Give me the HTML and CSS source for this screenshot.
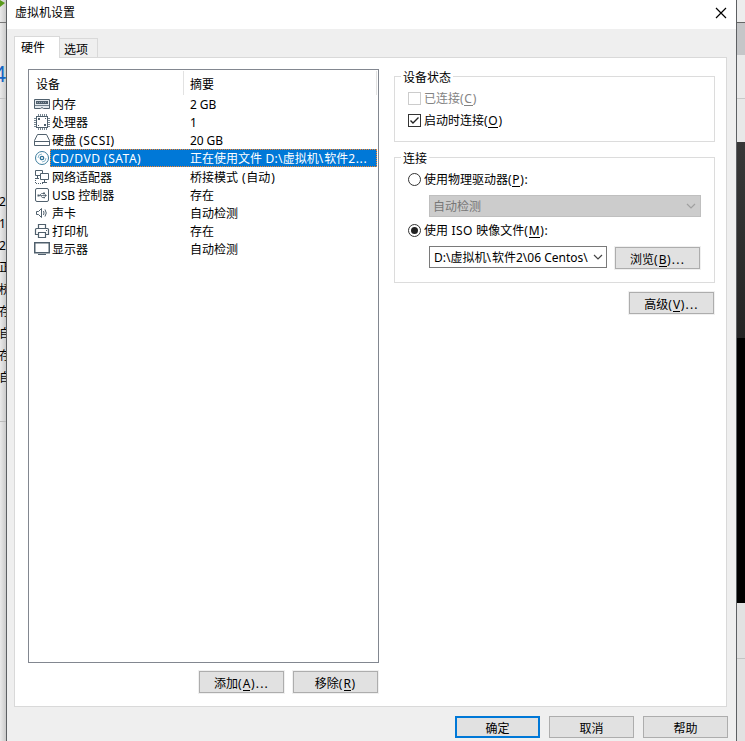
FILE: index.html
```html
<!DOCTYPE html>
<html lang="zh-CN">
<head>
<meta charset="utf-8">
<title>虚拟机设置</title>
<link rel="stylesheet" href="styles.css">
</head>
<body>
<div class="desktop">
  <div class="behind-left">
    <svg class="play" width="6" height="22" viewBox="0 0 6 22"><path d="M0 0L5 3L0 7Z" fill="#5a9a1c"/></svg>
    <div class="behind-tool"></div>
    <div class="behind-title">4</div>
    <div class="behind-list">
      <span>2</span><span>1</span><span>2</span><span>正</span><span>桥</span><span>存</span><span>自</span><span>存</span><span>自</span>
    </div>
    <div class="behind-rest"></div>
  </div>

  <div class="dialog">
    <div class="titlebar">
      <span>虚拟机设置</span>
      <svg width="12" height="12" viewBox="0 0 12 12"><path d="M1 1L11 11M11 1L1 11" stroke="#000" stroke-width="1.2"/></svg>
    </div>
    <div class="tabs">
      <div class="tab tab-active">硬件</div>
      <div class="tab">选项</div>
    </div>
    <div class="page">
      <div class="left">
        <div class="list">
          <div class="list-head"><div class="h-device">设备</div><div class="h-summary">摘要</div></div>
          <div class="row">
            <svg viewBox="0 0 16 18"><path d="M.5 4.500H15.500V13.500H9.500L8 12.500L6.500 13.500H.5Z" fill="#e3e9ed" stroke="#50606d"/><path d="M2 6H14V9H2Z" fill="#50606d"/><path d="M3 7.500H13" stroke="#93a0aa" stroke-dasharray="1 1"/><path d="M1 10.500H15" stroke="#73828e"/></svg>
            <span class="name">内存</span><span class="val s1">2 GB</span></div>
          <div class="row">
            <svg viewBox="0 0 16 18"><path d="M4.500 1V17M6.500 1V17M8.500 1V17M10.500 1V17M12.500 1V17M0 5.500H16M0 7.500H16M0 9.500H16M0 11.500H16M0 13.500H16" stroke="#778792"/><rect x="2.500" y="3.500" width="11" height="11" fill="#fff" stroke="#50606d"/><path d="M4 5H6V7H4ZM10 11H12V13H10ZM4 12H5V13H4ZM11 5H12V6H11Z" fill="#50606d"/></svg>
            <span class="name">处理器</span><span class="val">1</span></div>
          <div class="row">
            <svg viewBox="0 0 16 18"><path d="M3.500 3.500H12.500L15.500 9.500V14.500H.5V9.500Z" fill="#fff" stroke="#50606d"/><path d="M1 10.500H15" stroke="#50606d"/></svg>
            <span class="name">硬盘 <i class="s2">(SCSI)</i></span><span class="val s1">20 GB</span></div>
          <div class="row selected">
            <svg viewBox="0 0 16 18"><circle cx="8" cy="9" r="6.500" fill="#fff" stroke="#3d7d9d"/><circle cx="8" cy="9" r="1.700" fill="#fff" stroke="#2d7297" stroke-width="1.300"/><path d="M4 9A4 4 0 0 1 8 5M12 9A4 4 0 0 1 8 13" fill="none" stroke="#8dbad0"/></svg>
            <span class="pick"><span class="name s3">CD/DVD (SATA)</span><span class="val">正在使用文件<i class="path"> D:\</i>虚拟机<i class="slash">\</i>软件<i class="s4">2...</i></span></span></div>
          <div class="row">
            <svg viewBox="0 0 16 18"><path d="M1.500 2.500H8.500V7.500H1.500Z" fill="#fff" stroke="#50606d"/><path d="M6.500 5.500H14.500V11.500H6.500Z" fill="#fff" stroke="#50606d"/><path d="M10.500 12V14M8 14.500H13M3.500 8V10M1 10.500H5" stroke="#50606d"/><path d="M1.500 12V15.500H10" stroke="#50606d" fill="none" stroke-dasharray="1 1"/></svg>
            <span class="name">网络适配器</span><span class="val">桥接模式<i class="paren"> (</i>自动<i class="close">)</i></span></div>
          <div class="row">
            <svg viewBox="0 0 16 18"><rect x="1.500" y="2.500" width="13" height="13" rx="1.500" fill="#fff" stroke="#50606d"/><path d="M4 9.500H12M6 9L7.500 7.500H9M7 10L8 11.500H10" fill="none" stroke="#50606d" stroke-width=".8"/><path d="M3.500 8.500H5.500V10.500H3.500ZM9 6.500H11V8.200H9ZM9.500 10.800H11V12.300H9.500ZM11 8L13 9.500L11 11Z" fill="#50606d"/></svg>
            <span class="name">USB 控制器</span><span class="val">存在</span></div>
          <div class="row">
            <svg viewBox="0 0 16 18"><path d="M2.500 7.500H4.500L7.500 4.500V13.500L4.500 10.500H2.500Z" fill="#fff" stroke="#50606d"/><path d="M9.500 7Q10.500 9 9.500 11M11 5.500Q13.500 9 11 12.500" fill="none" stroke="#50606d"/></svg>
            <span class="name">声卡</span><span class="val">自动检测</span></div>
          <div class="row">
            <svg viewBox="0 0 16 18"><path d="M4.500 6.500V2.500H11.500V6.500M4 12.500H1.500V7.500Q1.500 6.500 2.500 6.500H13.500Q14.500 6.500 14.500 7.500V12.500H12M4.500 10.500H11.500V15.500H4.500Z" fill="none" stroke="#50606d" stroke-width="1.200"/><path d="M12 8H13V9H12Z" fill="#50606d"/></svg>
            <span class="name">打印机</span><span class="val">存在</span></div>
          <div class="row">
            <svg viewBox="0 0 16 18"><rect x=".75" y="2.750" width="14.500" height="10" fill="#fff" stroke="#50606d" stroke-width="1.500"/><path d="M4 14.500H12" stroke="#50606d"/></svg>
            <span class="name">显示器</span><span class="val">自动检测</span></div>
        </div>
        <div class="list-buttons">
          <div class="btn">添加<i>(<u>A</u>)...</i></div>
          <div class="btn">移除<i>(<u>R</u>)</i></div>
        </div>
      </div>
      <div class="right">
        <div class="group status">
          <div class="legend">设备状态</div>
          <div class="option disabled"><span class="check"></span>已连接<i>(<u>C</u>)</i></div>
          <div class="option"><span class="check"><svg width="11" height="11" viewBox="0 0 11 11"><path d="M1.500 5.500L4 8L9.500 2.500" fill="none" stroke="#222" stroke-width="1.400"/></svg></span>启动时连接<i>(<u>O</u>)</i></div>
        </div>
        <div class="group connection">
          <div class="legend">连接</div>
          <div class="option"><span class="radio"></span>使用物理驱动器<i>(<u>P</u>):</i></div>
          <div class="combo combo-disabled"><span>自动检测</span><svg width="10" height="6" viewBox="0 0 10 6"><path d="M1 1L5 5L9 1" fill="none" stroke="#a0a0a0" stroke-width="1.200"/></svg></div>
          <div class="option iso"><span class="radio radio-on"></span>使用<i class="iso-word"> ISO </i>映像文件<i>(<u>M</u>):</i></div>
          <div class="file">
            <div class="combo"><span class="file-path"><i>D:\</i>虚拟机<i class="slash">\</i>软件<i>2\06 Centos\</i></span><svg width="10" height="6" viewBox="0 0 10 6"><path d="M1 1L5 5L9 1" fill="none" stroke="#444" stroke-width="1.200"/></svg></div>
            <div class="btn">浏览<i>(<u>B</u>)...</i></div>
          </div>
        </div>
        <div class="btn advanced">高级<i>(<u>V</u>)...</i></div>
      </div>
    </div>
    <div class="footer">
      <div class="btn primary">确定</div>
      <div class="btn">取消</div>
      <div class="btn">帮助</div>
    </div>
  </div>

  <div class="behind-right">
    <div class="r-top"></div><div class="r-tab"></div><div class="r-band"></div><div class="r-gap"></div><div class="r-screen"></div><div class="r-black"></div><div class="r-low"></div><div class="r-end"></div>
  </div>
</div>
</body>
</html>
```
FILE: styles.css
```css
* { box-sizing: border-box; }
html, body { margin: 0; height: 741px; overflow: hidden; }
body { font: 12px/18px "Noto Sans", "Noto Sans CJK SC", sans-serif; color: #000; }
i { font-style: normal; }
u { text-decoration: none; box-shadow: inset 0 -1px 0 currentColor; display: inline-block; line-height: 14px; }
svg { display: block; flex: none; }

.desktop { display: flex; width: 745px; height: 741px; }

/* main window showing on both sides of the dialog */
.behind-left { width: 6px; overflow: hidden; background: linear-gradient(90deg, #eaeaea, #cbcbcb); display: flex; flex-direction: column; }
.play { height: 22px; }
.behind-tool { height: 37px; border-top: 1px solid #777; }
.behind-title { height: 40px; border-bottom: 1px solid #c4c4c4; color: #1464c4; font-size: 21px; line-height: 30px; text-indent: -6px; }
.behind-list { height: 323px; padding-top: 92px; border-bottom: 1px solid #bbb; display: flex; flex-direction: column; }
.behind-list span { height: 22px; line-height: 22px; white-space: nowrap; text-indent: -1px; }
.behind-rest { flex: 1; }

.behind-right { width: 8px; display: flex; flex-direction: column; }
.r-top { height: 22px; background: #ededed; }
.r-tab { height: 33px; background: #c5c6c8; border-top: 1px solid #666; }
.r-band { height: 43px; background: #eaeaea; }
.r-gap { height: 44px; background: #e8e8e8; border-top: 1px solid #c8c8c8; }
.r-screen { height: 196px; background: linear-gradient(#383838, #242424); }
.r-black { height: 265px; background: #000; }
.r-low { height: 55px; background: #e2e2e2; }
.r-end { flex: 1; background: #e2e2e2; border-top: 1px solid #c4c4c4; }

.dialog { width: 731px; border: solid #5d6063; border-width: 0 1px; background: #efefef; display: flex; flex-direction: column; }
.titlebar { height: 29px; background: #fff; display: flex; align-items: center; justify-content: space-between; padding: 0 9px 3px 8px; line-height: 20px; }
.tabs { height: 28px; padding: 7px 0 0 7px; display: flex; align-items: flex-end; }
.tab { height: 19px; width: 38px; padding-left: 4px; border: 1px solid #d9d9d9; border-width: 1px 1px 0 0; line-height: 21px; }
.tab-active { width: 46px; height: 22px; margin-bottom: -1px; padding-left: 6px; border-width: 1px 1px 0 1px; background: #fff; z-index: 1; }

.page { height: 650px; width: 713px; margin-left: 7px; border: 1px solid #d9d9d9; background: #fff; display: flex; padding: 11px 11px 0 13px; }
.left { width: 351px; }
.list { height: 594px; border: 1px solid #828790; }
.list-head { height: 25px; display: flex; padding-top: 1px; line-height: 28px; }
.h-device { width: 155px; padding-left: 7px; border-right: 1px solid #e2e2e2; }
.h-summary { width: 193px; padding-left: 6px; border-right: 1px solid #e2e2e2; }
.row { height: 18px; display: flex; padding-left: 5px; white-space: nowrap; line-height: 20px; }
.row > svg { width: 16px; height: 18px; }
.selected { margin-bottom: 1px; }
.name { width: 139px; padding-left: 2px; }
.row > .name { width: 140px; }
.pick { display: flex; width: 327px; height: 18px; background: #0078d7; border: 1px dotted #ff8728; color: #fff; line-height: 17px; }
.pick .name { padding-left: 1px; }
.s1 { letter-spacing: -.1px; }
.s2 { letter-spacing: .6px; }
.s3 { letter-spacing: .5px; }
.s4 { letter-spacing: .6px; }
.path { letter-spacing: .3px; }
.paren { letter-spacing: .8px; }
.close { margin-left: 1px; }
.slash { letter-spacing: 1px; }

.btn { width: 85px; height: 22px; border: 1px solid #adadad; background: #e1e1e1; box-shadow: 0 0 0 1px #f0f0f0; text-align: center; line-height: 23px; }
.btn i { letter-spacing: 1.2px; }
.btn u { letter-spacing: 0; margin-right: .5px; }
.list-buttons { display: flex; justify-content: flex-end; gap: 9px; margin-top: 8px; padding-right: 1px; }

.right { margin-left: 15px; width: 321px; padding-top: 7px; display: flex; flex-direction: column; }
.group { border: 1px solid #dcdcdc; }
.legend { width: max-content; height: 18px; margin: -9px 0 0 6px; padding: 0 2px; background: #fff; line-height: 20px; }
.status { height: 66px; }
.status .option { height: 22px; margin-top: 2px; }
.status .option + .option { margin-top: 0; }
.status .check { position: relative; top: -1px; }
.connection { height: 126px; margin-top: 15px; }
.option { display: flex; align-items: center; height: 22px; padding-left: 13px; white-space: pre; }
.option i { letter-spacing: .7px; }
.option .iso-word { letter-spacing: .4px; }
.connection .option { margin-top: 2px; }
.connection .iso { height: 23px; }
.connection .radio { margin-top: -1px; }
.disabled { color: #838383; }
.check { width: 13px; height: 13px; border: 1px solid #333; margin-right: 3px; background: #fff; }
.disabled .check { border-color: #ccc; }
.radio { width: 13px; height: 13px; border: 1px solid #333; border-radius: 50%; margin-right: 3px; display: flex; align-items: center; justify-content: center; }
.radio-on::after { content: ""; width: 7px; height: 7px; border-radius: 50%; background: #222; }
.combo { width: 178px; height: 22px; border: 1px solid #7a7a7a; background: #fff; padding: 0 3px 0 4px; display: flex; align-items: center; justify-content: space-between; white-space: nowrap; }
.combo-disabled { width: 272px; height: 22px; margin: 4px 0 0 34px; background: #ccc; border-color: #bfbfbf; color: #777; padding: 0 4px 0 3px; line-height: 20px; }
.combo-disabled span { padding-top: 2px; }
.file { display: flex; gap: 8px; margin: 4px 0 0 34px; }
.file-path { width: 154px; overflow: hidden; line-height: 17px; }
.file .btn { margin-top: 1px; }
.advanced { align-self: flex-end; margin: 9px 1px 0 0; }

.footer { display: flex; justify-content: flex-end; gap: 9px; padding: 9px 8px 0 0; }
.primary { border: 2px solid #0078d7; line-height: 21px; }
.footer .btn { box-shadow: none; }
```
